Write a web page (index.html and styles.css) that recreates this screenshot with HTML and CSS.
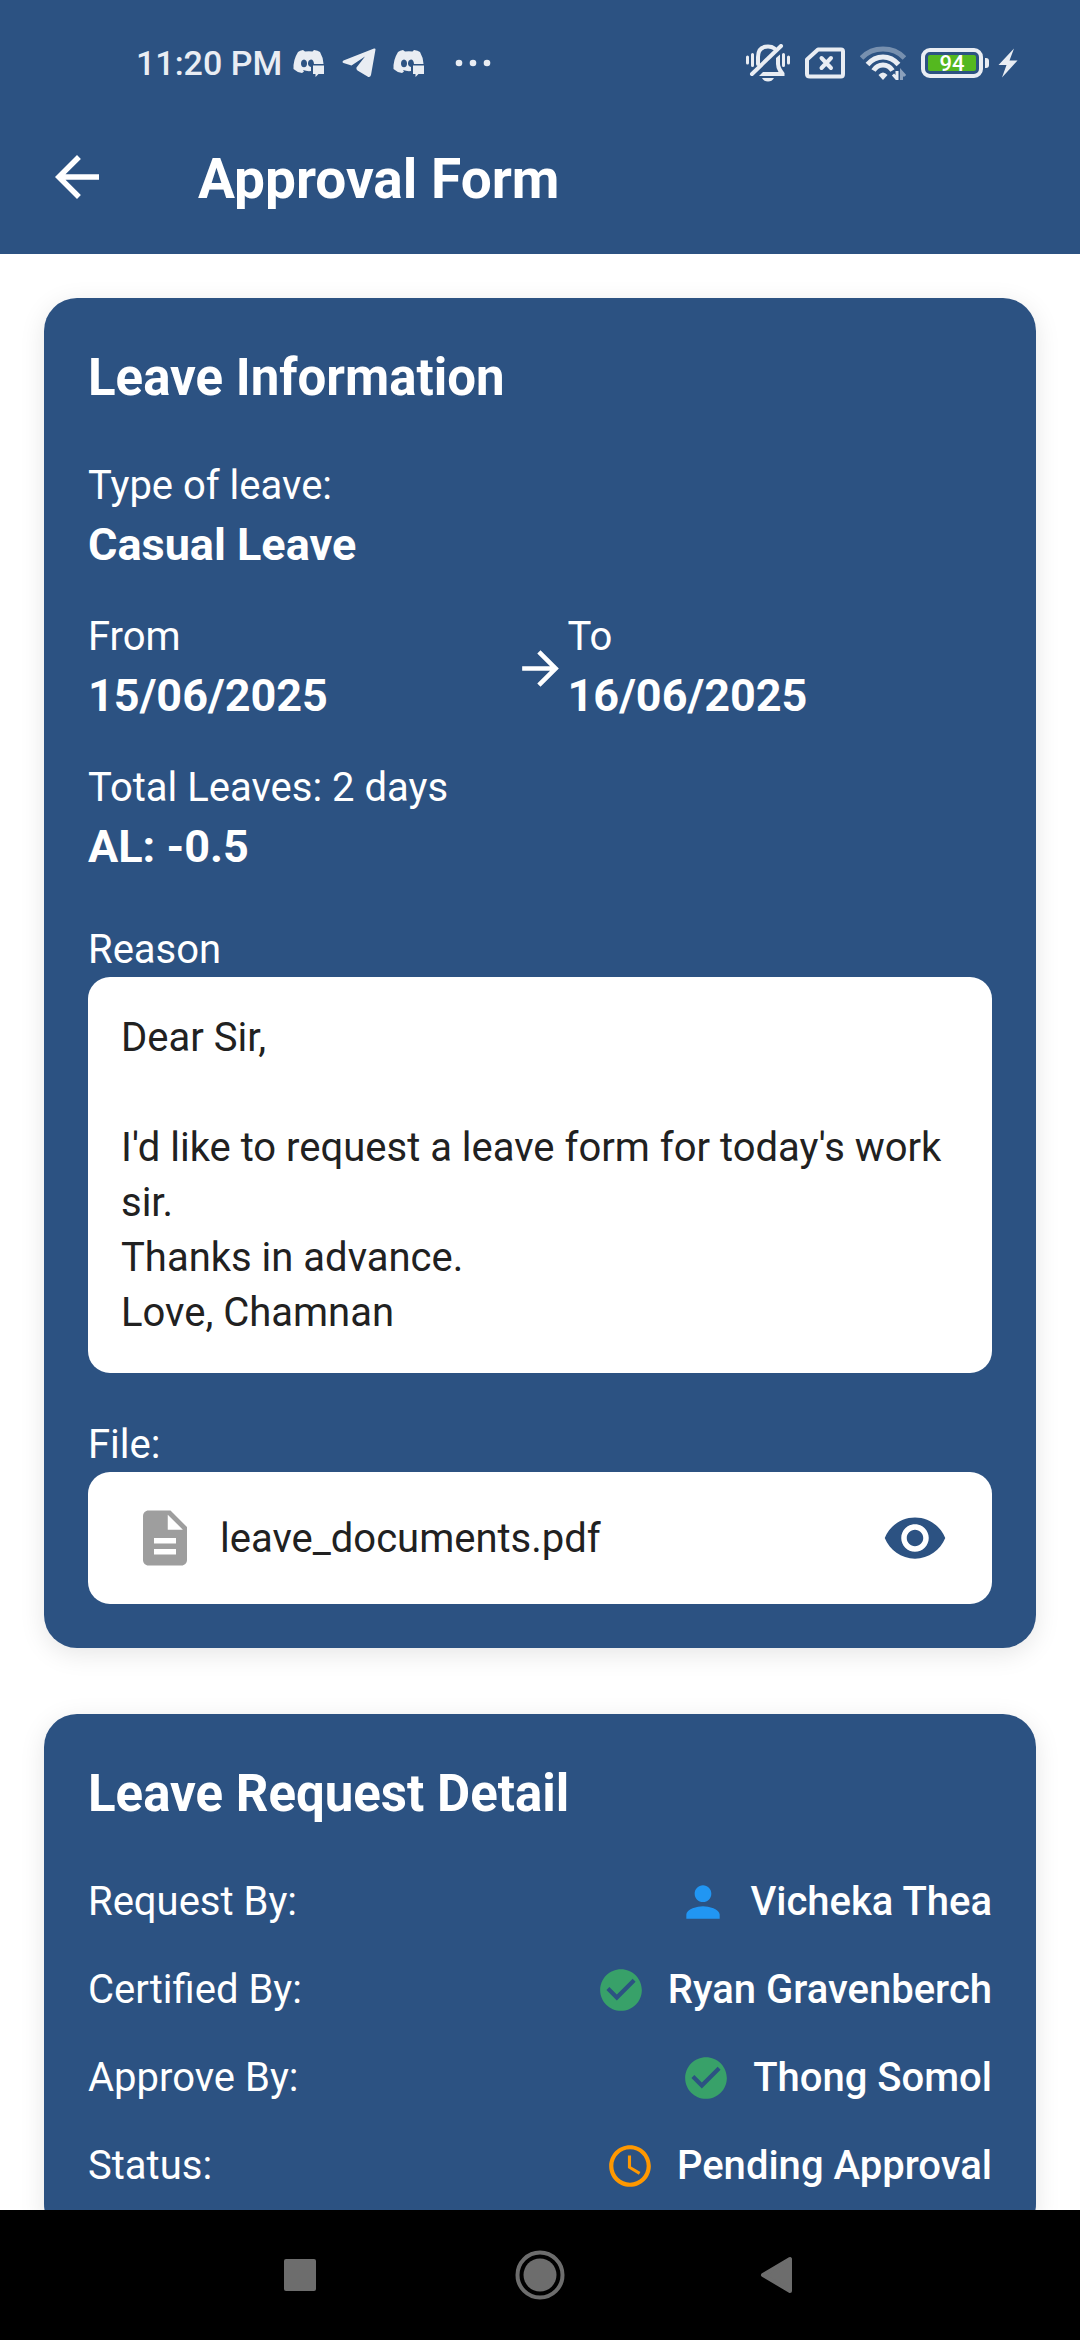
FILE: index.html
```html
<!DOCTYPE html>
<html lang="en">
<head>
<meta charset="utf-8">
<meta name="viewport" content="width=device-width, initial-scale=1">
<title>Approval Form</title>
<link rel="stylesheet" href="styles.css">
</head>
<body>
<svg class="defs" aria-hidden="true">
  <symbol id="discord" viewBox="0 0 32 28">
    <path fill="currentColor" fill-rule="evenodd" d="M10 1L12 2.500Q16 2 19.500 2.500L21 1Q25 1.500 27 3Q30.500 9 30.500 15H21Q20.600 10.500 18 10.500Q15 11 15 14.500Q15 17 18 18V22Q14 22.500 10 21L11 22.500L9 24Q3.500 23 .5 20Q0 11 5 3Q7 1.500 10 1ZM11 10.500Q8 11 8 14.500Q8 18 11 18.300Q14 18 14 14.500Q14 11 11 10.500Z"/>
    <path fill="currentColor" d="M20 16.500H31V25H25.500L22.500 28V25H20Z"/>
  </symbol>
  <symbol id="check" viewBox="0 0 24 24">
    <path fill="currentColor" d="M12 2C6.480 2 2 6.480 2 12s4.480 10 10 10 10-4.480 10-10S17.520 2 12 2zm-2 15l-5-5 1.410-1.410L10 14.170l7.590-7.590L19 8l-9 9z"/>
  </symbol>
</svg>

<div class="screen">
  <div class="status">
    <div class="status-left">
      <span class="time">11:20 PM</span>
      <svg class="s-discord" width="32" height="28"><use href="#discord"/></svg>
      <svg class="s-telegram" width="34" height="30" viewBox="0 0 34 30"><path fill="currentColor" d="M33.500 1.500Q33.500 0 32 .5L1.500 12.500Q-.5 14 1.500 15L9.500 17.500L23 8.500L14.500 19.500Q14 21 15.500 22.500L25.500 28.500Q28 30 29 27Z"/></svg>
      <svg class="s-discord" width="32" height="28"><use href="#discord"/></svg>
      <svg class="s-dots" width="36" height="8" viewBox="0 0 36 8" fill="currentColor"><circle cx="4" cy="4" r="3.300"/><circle cx="18" cy="4" r="3.300"/><circle cx="32" cy="4" r="3.300"/></svg>
    </div>
    <div class="status-right">
      <svg width="44" height="38" viewBox="0 0 44 38" fill="none" stroke="currentColor" stroke-width="3" stroke-linecap="round">
        <path d="M1.500 13V19M6.500 10.500V21.500M37.500 10.500V21.500M42.500 13V19"/>
        <path d="M12 20V13Q12 2.500 22 2.500Q26 2.500 28.500 4.500" stroke-width="4"/>
        <path d="M6 30L35 2" stroke-width="4"/>
        <path fill="currentColor" stroke="none" d="M30 14L34 10.500V20Q34 23 38.500 29V32H13L17 28H32.500Q30 24 30 20Z"/>
        <path fill="currentColor" stroke="none" d="M16 34H28Q26 37.500 22 37.500Q18 37.500 16 34Z"/>
      </svg>
      <svg width="40" height="32" viewBox="0 0 40 32" fill="none" stroke="currentColor" stroke-width="4" stroke-linejoin="round" stroke-linecap="round">
        <path d="M13 2.500H36Q38 2.500 38 4.500V27Q38 29.500 36 29.500H5Q2 29.500 2 27V12.500Z"/>
        <path d="M16.500 11L26 21M26 11L16.500 21"/>
      </svg>
      <svg width="46" height="34" viewBox="0 0 46 34" fill="none" stroke="currentColor" stroke-width="5">
        <path opacity=".4" d="M1.500 12Q10 3 23 3T44.500 12"/>
        <path d="M7.500 18.500Q14 11 23 11T38.500 18.500"/>
        <path d="M13.500 24.500Q17 19 23 19T32.500 24.500"/>
        <path fill="currentColor" stroke="none" d="M18.500 29Q23 24 27.500 29L23 34Z"/>
        <path stroke-width="3" d="M37 25V33L33 28.500"/>
        <path opacity=".5" stroke-width="3" d="M41.500 34V26L45 30"/>
      </svg>
      <span class="battery"><span class="battery-level">94</span></span>
      <svg class="s-bolt" width="20" height="30" viewBox="0 0 20 30"><path fill="currentColor" d="M16 .5L.5 17H8.500L4 29.500L19.500 12.500H11.500Z"/></svg>
    </div>
  </div>

  <header class="appbar">
    <button class="icon-button" type="button" aria-label="Back">
      <svg class="icon-lg" viewBox="0 0 24 24"><path fill="currentColor" d="M20 11H7.830l5.590-5.590L12 4l-8 8 8 8 1.410-1.410L7.830 13H20v-2z"/></svg>
    </button>
    <h1>Approval Form</h1>
  </header>

  <main class="content">
    <section class="card">
      <h2>Leave Information</h2>
      <div class="facts">
        <div>
          <p class="label">Type of leave:</p>
          <p class="value">Casual Leave</p>
        </div>
        <div class="dates">
          <div>
            <p class="label">From</p>
            <p class="value">15/06/2025</p>
          </div>
          <svg class="icon-md" viewBox="0 0 24 24" aria-hidden="true"><path fill="currentColor" d="M12 4l-1.410 1.410L16.170 11H4v2h12.170l-5.580 5.590L12 20l8-8z"/></svg>
          <div>
            <p class="label">To</p>
            <p class="value">16/06/2025</p>
          </div>
        </div>
        <div>
          <p class="label">Total Leaves: 2 days</p>
          <p class="value">AL: -0.5</p>
        </div>
      </div>
      <div>
        <p class="label">Reason</p>
        <p class="panel reason">Dear Sir,

I'd like to request a leave form for today's work sir.
Thanks in advance.
Love, Chamnan</p>
      </div>
      <div>
        <p class="label">File:</p>
        <div class="panel file">
          <svg class="icon-lg file-icon" viewBox="0 0 24 24" aria-hidden="true"><path fill="currentColor" d="M14 2H6c-1.100 0-1.990.9-1.990 2L4 20c0 1.100.89 2 1.990 2H18c1.100 0 2-.9 2-2V8l-6-6zm2 16H8v-2h8v2zm0-4H8v-2h8v2zm-3-5V3.500L18.500 9H13z"/></svg>
          <span class="file-name">leave_documents.pdf</span>
          <button class="icon-button view" type="button" aria-label="View file">
            <svg class="icon-lg" viewBox="0 0 24 24"><path fill="currentColor" d="M12 4.500C7 4.500 2.730 7.610 1 12c1.730 4.390 6 7.500 11 7.500s9.270-3.110 11-7.500c-1.730-4.390-6-7.500-11-7.500zM12 17c-2.760 0-5-2.240-5-5s2.240-5 5-5 5 2.240 5 5-2.240 5-5 5zm0-8c-1.660 0-3 1.340-3 3s1.340 3 3 3 3-1.340 3-3-1.340-3-3-3z"/></svg>
          </button>
        </div>
      </div>
    </section>

    <section class="card">
      <h2>Leave Request Detail</h2>
      <dl class="details">
        <div class="row">
          <dt>Request By:</dt>
          <dd><svg class="icon-sm person" viewBox="0 0 24 24" aria-hidden="true"><path fill="currentColor" d="M12 12c2.210 0 4-1.790 4-4s-1.790-4-4-4-4 1.790-4 4 1.790 4 4 4zm0 2c-2.670 0-8 1.340-8 4v2h16v-2c0-2.660-5.330-4-8-4z"/></svg>Vicheka Thea</dd>
        </div>
        <div class="row">
          <dt>Certified By:</dt>
          <dd><svg class="icon-sm done" aria-hidden="true"><use href="#check"/></svg>Ryan Gravenberch</dd>
        </div>
        <div class="row">
          <dt>Approve By:</dt>
          <dd><svg class="icon-sm done" aria-hidden="true"><use href="#check"/></svg>Thong Somol</dd>
        </div>
        <div class="row">
          <dt>Status:</dt>
          <dd><svg class="icon-sm pending" viewBox="0 0 24 24" aria-hidden="true"><path fill="currentColor" d="M11.990 2C6.470 2 2 6.480 2 12s4.470 10 9.990 10C17.520 22 22 17.520 22 12S17.520 2 11.990 2zM12 20c-4.420 0-8-3.580-8-8s3.580-8 8-8 8 3.580 8 8-3.580 8-8 8zm.5-13H11v6l5.250 3.150.75-1.230-4.500-2.670z"/></svg>Pending Approval</dd>
        </div>
      </dl>
    </section>
  </main>

  <nav class="navbar" aria-label="System">
    <button class="icon-button" type="button" aria-label="Recent apps"><svg width="60" height="60" viewBox="0 0 60 60"><rect x="14" y="14" width="32" height="32" rx="2" fill="currentColor"/></svg></button>
    <button class="icon-button" type="button" aria-label="Home"><svg width="60" height="60" viewBox="0 0 60 60"><circle cx="30" cy="30" r="16.500" fill="currentColor"/><circle cx="30" cy="30" r="22.500" fill="none" stroke="currentColor" stroke-width="4"/></svg></button>
    <button class="icon-button" type="button" aria-label="Back"><svg width="60" height="60" viewBox="0 0 60 60"><path d="M13 30L40 14V46Z" fill="currentColor" stroke="currentColor" stroke-width="4" stroke-linejoin="round"/></svg></button>
  </nav>
</div>
</body>
</html>
```

FILE: styles.css
```css
:root {
  --blue: #2c5282;
  --ink: #212121;
}

* {
  box-sizing: border-box;
  margin: 0;
}

body {
  background: #fff;
  color: #fff;
  font: 400 40px/55px Roboto, "Noto Sans", sans-serif;
}

svg {
  display: block;
  flex: none;
}

.defs {
  position: absolute;
  width: 0;
  height: 0;
}

.screen {
  display: flex;
  flex-direction: column;
  height: 100vh;
}

/* System status bar */
.status {
  display: flex;
  align-items: center;
  justify-content: space-between;
  height: 100px;
  padding: 26px 62px 0 136px;
  background: var(--blue);
  color: #e9edf3;
  flex: none;
}

.status-left,
.status-right {
  display: flex;
  align-items: center;
}

.status-left {
  gap: 17px;
}

.status-right {
  gap: 15px;
}

.time {
  margin-right: -6px;
  font-size: 34px;
  font-weight: 500;
  line-height: 40px;
}

.s-dots {
  margin-left: 13px;
}

.battery {
  position: relative;
  width: 62px;
  height: 30px;
  padding: 3px;
  border: 4px solid currentColor;
  border-radius: 9px;
}

.battery::after {
  content: "";
  position: absolute;
  top: 6px;
  right: -10px;
  width: 4px;
  height: 10px;
  border-radius: 0 3px 3px 0;
  background: currentColor;
}

.battery-level {
  display: block;
  height: 16px;
  border-radius: 2px;
  background: #54b81f;
  color: #fff;
  font-size: 22px;
  font-weight: 500;
  line-height: 18px;
  text-align: center;
}

/* App bar */
.appbar {
  display: flex;
  align-items: center;
  gap: 88px;
  height: 154px;
  padding: 0 44px;
  background: var(--blue);
  flex: none;
}

.appbar h1 {
  padding-top: 4px;
  font-size: 55px;
  font-weight: 700;
  line-height: 64px;
}

.icon-button {
  display: block;
  padding: 0;
  border: 0;
  background: none;
  color: inherit;
}

.icon-lg {
  width: 66px;
  height: 66px;
}

.icon-md {
  width: 55px;
  height: 55px;
}

.icon-sm {
  width: 50px;
  height: 50px;
}

/* Scrolling content */
.content {
  display: flex;
  flex: 1;
  flex-direction: column;
  gap: 66px;
  min-height: 0;
  padding: 44px;
  overflow-y: auto;
  scrollbar-width: none;
}

.card {
  display: flex;
  flex: none;
  flex-direction: column;
  gap: 44px;
  padding: 44px;
  border-radius: 33px;
  background: var(--blue);
  box-shadow: 0 6px 26px rgba(0, 0, 0, 0.1);
}

.card h2 {
  font-size: 51px;
  font-weight: 700;
  line-height: 72px;
}

.facts,
.details {
  display: flex;
  flex-direction: column;
  gap: 33px;
}

.value {
  font-size: 45px;
  font-weight: 700;
  line-height: 63px;
}

.dates {
  display: grid;
  grid-template-columns: 1fr auto 1fr;
  align-items: center;
}

.panel {
  border-radius: 22px;
  background: #fff;
  color: var(--ink);
}

.reason {
  padding: 33px;
  white-space: pre-line;
}

.file {
  display: flex;
  align-items: center;
  gap: 22px;
  padding: 33px 44px;
}

.file-icon {
  color: #9e9e9e;
}

.file-name {
  flex: 1;
}

.view {
  color: var(--blue);
}

.row,
.row dd {
  display: flex;
  align-items: center;
}

.row {
  justify-content: space-between;
}

.row dd {
  gap: 22px;
  font-weight: 500;
}

.person {
  color: #2196f3;
}

.done {
  color: #38a169;
}

.pending {
  color: #ff9800;
}

/* System navigation bar */
.navbar {
  display: flex;
  flex: none;
  align-items: center;
  justify-content: center;
  gap: 180px;
  height: 130px;
  background: #000;
  color: #6d6d6d;
}
```
